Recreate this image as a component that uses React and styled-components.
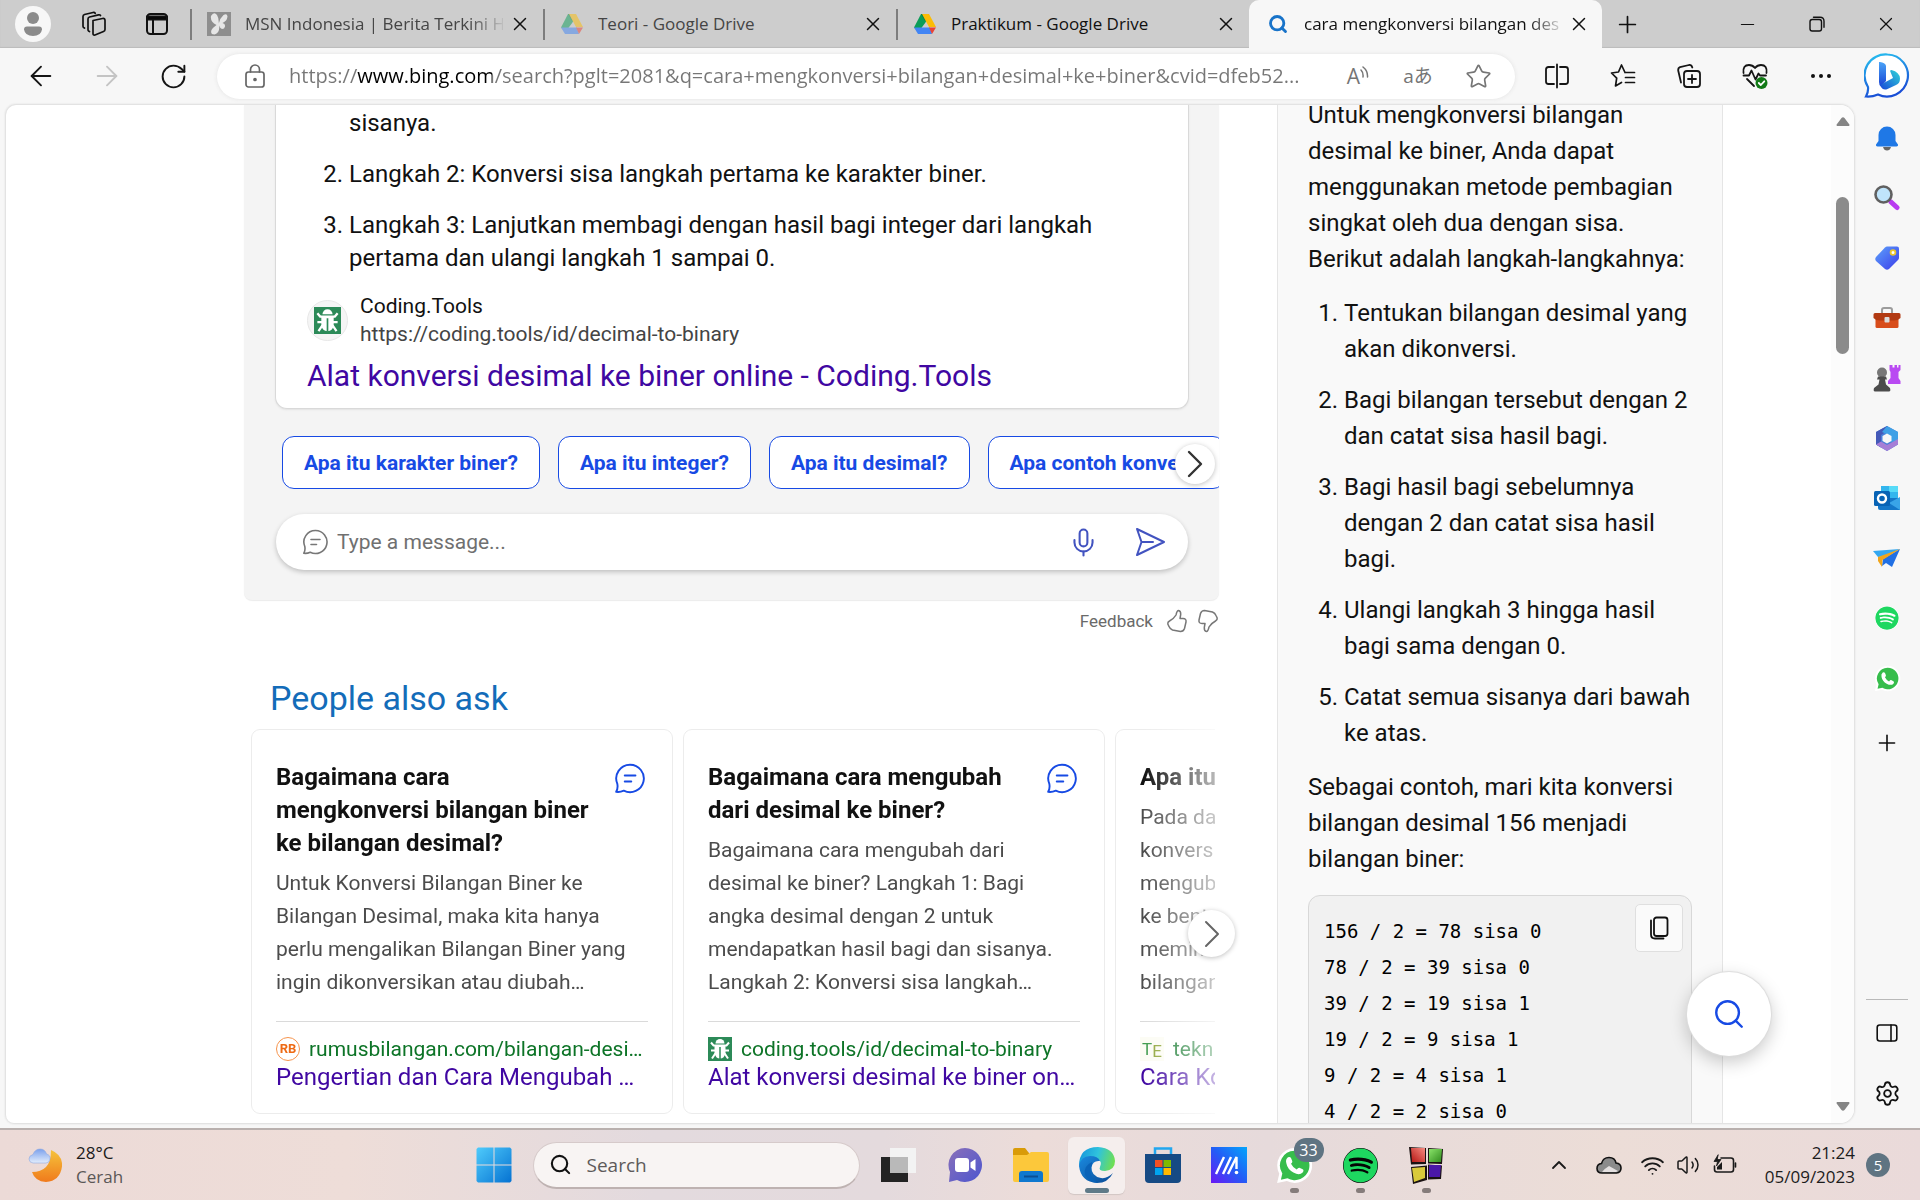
import React from "react";
import styled, { createGlobalStyle, css } from "styled-components";
import {
  ArrowLeft, ArrowRight, RotateCw, Star, X, Plus, Minus, Search, Mic,
  ChevronUp, Wifi, Volume2, Settings,
} from "lucide-react";
import { FaSpotify } from "react-icons/fa";

const ui = `"Open Sans", "Noto Sans", "Noto Sans CJK JP", sans-serif`;
const body = `Roboto, "Liberation Sans", sans-serif`;

const Global = createGlobalStyle`
  *, *::before, *::after { box-sizing: border-box; }
  body { margin: 0; background: #f7f7f7; }
  button { font: inherit; color: inherit; background: none; border: 0; padding: 0; cursor: pointer; }
  input { font: inherit; border: 0; padding: 0; background: none; outline: none; min-width: 0; }
  a { text-decoration: none; color: inherit; }
  p, h2, h3, ol, pre { margin: 0; padding: 0; font-weight: inherit; }
  svg { display: block; flex: none; }
`;

const Screen = styled.div`
  display: flex; flex-direction: column; height: 100vh; overflow: hidden;
  font-family: ${ui}; color: #111; background: #f7f7f7;
`;

/* ---------- browser chrome ---------- */
const TabStrip = styled.header`
  display: flex; height: 48px; flex: none; background: #cdcdcd; padding-left: 2px;
  box-shadow: inset 0 -1px 1px #bcbcbc;
`;
const StripButton = styled.button`
  width: ${p => p.$w || 62}px; display: flex; align-items: center; justify-content: center; flex: none;
`;
const Avatar = styled.span`
  width: 36px; height: 36px; border-radius: 50%; background: #f7f7f7;
  display: flex; align-items: center; justify-content: center;
`;
const Tab = styled.div`
  flex: 0 1 353px; min-width: 0; display: flex; align-items: center; padding: 0 12px 0 15px;
  border-left: 2px solid;
  border-image: linear-gradient(transparent 20%, #7d7d7d 20%, #7d7d7d 82%, transparent 82%) 1;
  font-size: 17px; color: ${p => (p.$dim ? "#454545" : "#111")};
  ${p => p.$active && css`
    border: 0; background: #f7f7f7; border-radius: 10px 10px 0 0; padding-left: 17px;
  `}
`;
const TabTitle = styled.span`
  flex: 1; min-width: 0; margin: 0 6px 0 14px; overflow: hidden; white-space: nowrap; line-height: 26px;
  ${p => p.$fade && css`mask-image: linear-gradient(to right, #000 calc(100% - 34px), rgba(0, 0, 0, 0.1));`}
`;
const TabSearch = styled(Search)`width: 24px; height: 24px; padding: 2px;`;
const Spacer = styled.div`flex: 1;`;

const Toolbar = styled.nav`display: flex; align-items: center; height: 57px; flex: none; padding: 0 0 1px 8px;`;
const ToolButton = styled.button`
  width: 66px; height: 45px; display: flex; align-items: center; justify-content: center; flex: none;
  color: ${p => (p.$off ? "#c4c4c4" : "#151515")};
`;
const Address = styled.form`
  flex: 1; min-width: 0; height: 45px; margin: 0 9px 0 11px; border-radius: 23px; background: #fff;
  box-shadow: 0 0 4px #e2e2e2; display: flex; align-items: center; padding: 0 7px 0 27px; color: #666;
`;
const AddressInput = styled.input`
  flex: 1; margin-left: 23px; font-size: 20px; line-height: 30px; text-overflow: ellipsis;
  color: transparent; background-clip: text; -webkit-background-clip: text;
  background-image: linear-gradient(to right, #767676 68px, #000 68px, #000 203px, #767676 203px);
`;
const AddressButton = styled.button`
  width: 60px; height: 45px; display: flex; align-items: center; justify-content: center; flex: none;
  font-size: 21px; color: #757575;
`;
const Translate = styled.span`font-size: 19px; line-height: 24px;`;
const BingButton = styled.button`width: 66px; display: flex; justify-content: center; flex: none;`;

const Body = styled.div`flex: 1; min-height: 0; display: flex; padding: 0 0 5px 6px;`;
const Frame = styled.div`
  flex: 1; min-width: 0; display: flex; overflow: hidden; background: #fff;
  border-radius: 10px 14px 14px 8px; box-shadow: 0 0 2px 1px #dcdcdc;
`;
const Page = styled.main`
  flex: 1; min-width: 0; position: relative; overflow: hidden; font-family: ${body};
  display: grid; grid-template-columns: minmax(0, 975px) 446px; column-gap: 58px; padding-left: 238px;
`;
const ScrollTrack = styled.div`
  width: 23px; flex: none; background: #fcfcfc; display: flex; flex-direction: column; align-items: center;
  padding: 12px 0;
`;
const Thumb = styled.div`width: 13px; height: 157px; border-radius: 7px; background: #8b8b8b; margin-top: 70px;`;

/* ---------- answer column ---------- */
const Column = styled.div`min-width: 0;`;
const ChatPanel = styled.section`
  background: #f4f4f4; border-radius: 0 0 8px 8px; padding-bottom: 30px; box-shadow: 0 1px 1px #ececec;
`;
const AnswerCard = styled.article`
  margin: 0 30px 0 31px; background: #fff; border: 1px solid #d9d9d9; border-top: 0;
  border-radius: 0 0 12px 12px; padding: 2px 31px 13px; box-shadow: 0 1px 2px #e2e2e2;
`;
const Steps = styled.ol`
  padding-left: ${p => (p.$side ? 36 : 42)}px; line-height: ${p => (p.$side ? 36 : 33)}px;
  font-size: 24px; color: #111;
  li + li { margin-top: ${p => (p.$side ? 15 : 18)}px; }
`;
const Step = styled.li`list-style: ${p => (p.$continued ? "none" : "decimal")};`;
const Site = styled.div`display: flex; align-items: center; gap: 12px; margin-top: 17px;`;
const SiteBadge = styled.span`
  width: 41px; height: 41px; border-radius: 50%; background: #f5f5f5; border: 1px solid #e8e8e8;
  display: flex; align-items: center; justify-content: center;
`;
const SiteText = styled.div`font-size: 21px; line-height: 28px; display: flex; flex-direction: column; color: #111;`;
const SiteUrl = styled.span`color: #444;`;
const ResultLink = styled.a`display: block; margin-top: 9px; font-size: 30px; line-height: 38px; color: #4007a2;`;

const ChipRow = styled.div`position: relative; margin-top: 27px; padding-left: 38px;`;
const Chips = styled.div`display: flex; gap: 18px; overflow: hidden;`;
const Chip = styled.button`
  height: 53px; flex: none; padding: 0 21px; border: 1px solid #174ae4; border-radius: 12px; background: #fff;
  color: #174ae4; font-size: 21px; font-weight: 700; white-space: nowrap; line-height: 28px;
`;
const RoundNext = styled.button`
  position: absolute; display: flex; align-items: center; justify-content: center; border-radius: 50%;
  background: #fff; box-shadow: 0 1px 5px rgba(0, 0, 0, 0.25);
  width: ${p => p.$size}px; height: ${p => p.$size}px; right: ${p => p.$right}px; top: ${p => p.$top}px;
  color: ${p => p.$ink || "#333"};
`;
const Composer = styled.form`
  margin: 25px 31px 0 32px; height: 56px; border-radius: 28px; background: #fff; display: flex; align-items: center;
  padding: 0 22px 0 26px; box-shadow: 0 2px 5px rgba(0, 0, 0, 0.22); color: #777;
  input { flex: 1; margin-left: 9px; font-size: 21px; line-height: 28px; color: #222; }
  input::placeholder { color: #707070; opacity: 1; }
  button { color: #4253c0; margin-left: 36px; }
`;
const Feedback = styled.div`
  display: flex; align-items: center; justify-content: flex-end; gap: 9px; height: 42px; color: #777;
  font-size: 17px; margin-bottom: 34px;
  span { margin-right: 4px; color: #6a6a6a; }
`;
const AskTitle = styled.h2`margin-left: 26px; font-size: 34px; line-height: 44px; color: #136cb9;`;
const AskWrap = styled.div`position: relative; margin: 9px 4px 0 7px;`;
const AskCards = styled.div`
  display: flex; gap: 10px; overflow: hidden;
  mask-image: linear-gradient(to right, #000 calc(100% - 72px), rgba(0, 0, 0, 0.3));
`;
const AskCard = styled.article`
  flex: 0 0 422px; border: 1px solid #ececec; border-radius: 9px; padding: 31px 24px 21px; white-space: nowrap;
`;
const AskHead = styled.div`display: flex; justify-content: space-between; align-items: flex-start;`;
const AskQuestion = styled.h3`font-size: 24px; line-height: 33px; font-weight: 700; color: #111;`;
const AskChat = styled.button`margin: 2px 3px 0 0;`;
const AskAnswer = styled.p`margin-top: 7px; font-size: 21px; line-height: 33px; color: #4c4c4c;`;
const Line = styled.span`display: block;`;
const AskSource = styled.a`
  display: block; margin-top: 22px; border-top: 1px solid #dadada; padding-top: 14px;
  font-size: 24px; line-height: 30px; color: #4007a2;
`;
const SourceUrl = styled.span`
  display: flex; align-items: center; gap: 9px; height: 26px; font-size: 21px; line-height: 26px; color: #0d7427;
`;
const LetterMark = styled.span`
  width: 24px; height: 24px; flex: none; display: flex; align-items: center; justify-content: center;
  font-size: 13px; line-height: 24px; font-weight: 700; color: #ee6a14;
  ${p => (p.$ring ? css`border: 1px solid #f5934c; border-radius: 50%;` : css`
    font-size: 17px; font-weight: 400; color: #3f9a4c; background: #fcfcf4;
    b { font-weight: 400; color: #8fa53a; padding-top: 4px; }
  `)}
`;

/* ---------- chat column ---------- */
const SidePanel = styled.aside`
  background: #f9f9f9; border: solid #e5e5e5; border-width: 0 1px; padding: 0 30px; overflow: hidden; height: 1018px;
  font-size: 24px; line-height: 36px; color: #111;
`;
const SideFlow = styled.div`display: flex; flex-direction: column; gap: 18px; margin-top: -8px; white-space: nowrap;`;
const CodeBox = styled.div`
  position: relative; border: 1px solid #d8d8d8; border-radius: 12px; background: #f1f1f1; padding: 17px 15px; height: 300px;
  pre { font-family: "DejaVu Sans Mono", "Liberation Mono", monospace; font-size: 19px; line-height: 36px; color: #000; }
`;
const CopyButton = styled.button`
  position: absolute; top: 8px; right: 8px; width: 48px; height: 48px; border: 1px solid #dfdfdf; border-radius: 5px;
  background: #fafafa; display: flex; align-items: center; justify-content: center;
`;
const SearchFab = styled.button`
  position: absolute; right: 60px; bottom: 67px; width: 84px; height: 84px; border-radius: 50%; background: #fff;
  box-shadow: 0 0 1px 1px #dcdcdc, 0 6px 18px rgba(0, 0, 0, 0.22); color: #174ae4;
  display: flex; align-items: center; justify-content: center;
`;

/* ---------- edge sidebar ---------- */
const SideBar = styled.nav`width: 66px; flex: none; display: flex; flex-direction: column; align-items: center; padding-top: 3px;`;
const SideButton = styled.button`width: 48px; height: 60px; flex: none; display: flex; align-items: center; justify-content: center;`;
const SideTools = styled.div`margin-top: auto; padding-top: 3px; border-top: 1px solid #b9b9b9; width: 42px; display: flex; flex-direction: column; align-items: center;`;
const SideApps = styled.div`display: flex; flex-direction: column; margin-bottom: 5px;`;

/* ---------- taskbar ---------- */
const TaskBar = styled.footer`
  height: 72px; flex: none; display: grid; grid-template-columns: 1fr auto 1fr; border-top: 2px solid #b9b0ae;
  background: linear-gradient(90deg, #ecdad7 0%, #eeddd8 18%, #e3dade 34%, #e4dadd 46%, #ecdcd9 54%, #e6dadb 66%, #ecddd7 84%, #eadada 100%);
`;
const Weather = styled.button`display: flex; align-items: center; gap: 14px; padding-left: 28px; text-align: left; justify-self: start;`;
const TwoLines = styled.span`
  display: flex; flex-direction: column; font-size: 17px; line-height: 24px; color: #1c1c1c; white-space: nowrap;
  text-align: ${p => p.$align || "left"};
  small { font-size: 17px; color: ${p => (p.$align ? "#1c1c1c" : "#5b5756")}; }
`;
const Apps = styled.div`display: flex; align-items: center;`;
const AppButton = styled.button`
  width: 66px; height: 70px; display: flex; align-items: center; justify-content: center; position: relative;
  &::after {
    content: ""; display: ${p => (p.$running || p.$focused ? "block" : "none")}; position: absolute; bottom: 7px;
    width: ${p => (p.$focused ? 24 : 9)}px; height: 5px; border-radius: 3px;
    background: ${p => (p.$focused ? "#5f7a88" : "#857c7b")};
  }
`;
const Tile = styled.span`
  width: 57px; height: 57px; border-radius: 6px; background: #f5eeed; box-shadow: 0 1px 1px #d2c6c4;
  display: flex; align-items: center; justify-content: center;
`;
const Count = styled.span`
  position: absolute; top: 8px; right: 4px; min-width: 30px; height: 24px; border-radius: 12px; background: #5f7482;
  color: #fff; font-size: 16px; line-height: 24px; text-align: center;
`;
const TaskSearch = styled.label`
  width: 327px; height: 47px; margin: 0 6px; border-radius: 24px; background: #f8f4f3; border: 1px solid #d6caca;
  border-bottom: 2px solid #beb2b1; display: flex; align-items: center; padding-left: 15px; gap: 15px;
  input { flex: 1; font-size: 19px; line-height: 28px; }
  input::placeholder { color: #5e5a5a; opacity: 1; }
`;
const Tray = styled.div`display: flex; align-items: center; justify-content: flex-end; padding-right: 30px;`;
const TrayButton = styled.button`
  height: 48px; width: ${p => p.$w}px; display: flex; align-items: center; justify-content: center; color: #1a1a1a; flex: none;
`;
const Clock = styled.button`margin-left: 20px;`;
const Notice = styled.button`
  width: 24px; height: 24px; border-radius: 50%; background: #5f7482; color: #fff; font-size: 15px; line-height: 24px; margin-left: 11px;
`;

/* ---------- drawings ---------- */
const line = { fill: "none", stroke: "currentColor", strokeLinecap: "round", strokeLinejoin: "round" };

const Workspaces = () => (
  <svg width="26" height="26" viewBox="0 0 26 26" {...line} strokeWidth="1.7">
    <path d="M12 9.500 21.500 7.500Q24 7 24 9.500V18.500Q24 20 22.500 20.500L14 24Q12 24.500 12 22.500Z" />
    <path d="M8.500 20.500 7.500 20Q7 19.500 7 18.500V8Q7 6.500 8.500 6L17.500 3.800Q19 3.500 19.500 4.500" />
    <path d="M3.500 17 2.500 16.500Q2 16 2 15V5.500Q2 4 3.500 3.500L12 1.500Q13.500 1.200 14.200 2.300" />
  </svg>
);
const TabActions = () => (
  <svg width="24" height="24" viewBox="0 0 24 24" {...line} strokeWidth="2">
    <rect x="2" y="2" width="20" height="20" rx="3.500" /><path d="M2 4.500h20V7.500H2z" fill="#000" /><path d="M8 8v14" />
  </svg>
);
const Person = () => (
  <svg width="20" height="26" viewBox="0 0 20 26" fill="#8b8b8b"><circle cx="10" cy="7" r="6" /><path d="M1 18.500Q1 15.500 4 15.500H16Q19 15.500 19 18.500Q18 25 10 25T1 18.500Z" /></svg>
);
const Msn = () => (
  <svg width="24" height="24" viewBox="0 0 24 24"><path fill="#8e8e8e" d="M0 0h24v24H0z" /><path fill="#e6e6e6" d="M4 4q3-5 6-1 2 3 1.800 8.500Q13 6 16.500 3 20 1 20.500 4.500 20 9 15.500 11q3 .5 2.500 3.500-.5 2.500-3 2.500-2-.5-2.800-3.500Q13 21 7.500 22.500 3 22.500 4.500 18 6 15.500 9.500 13 3 9.500 4 4Z" /></svg>
);
const Drive = ({ faded }) => (
  <svg width="24" height="24" viewBox="0 0 24 24" opacity={faded ? 0.5 : 1}>
    <path fill="#0b9d58" d="M8 2h4l3 5L5.500 20 1 15.500z" /><path fill="#0a7f43" d="M8 2 12 9 15 7 12 2z" />
    <path fill="#fbbc05" d="M9 2h7l7 13h-7z" /><path fill="#4285f4" d="M1 15.500h16L19 22H5z" /><path fill="#ea4335" d="M16 15.500h7L19 22z" />
  </svg>
);
const Restore = () => (
  <svg width="18" height="18" viewBox="0 0 18 18" {...line} strokeWidth="1.4"><rect x="2" y="4.500" width="11.500" height="11.500" rx="2.200" /><path d="M5.500 2.200h6.500q4 0 4 4v6" /></svg>
);
const Padlock = () => (
  <svg width="22" height="26" viewBox="0 0 22 26" {...line} strokeWidth="1.7"><rect x="2" y="9" width="18" height="15" rx="2.500" /><path d="M6.500 9V6.500a4.500 4.500 0 0 1 9 0V9" /><circle cx="11" cy="16.500" r="1" fill="currentColor" /></svg>
);
const Waves = () => (
  <svg width="9" height="20" viewBox="0 0 9 20" {...line} strokeWidth="1.500"><path d="M1 4q2.500 2.500 2 7M3 1q5 4 4.500 10" /></svg>
);
const SplitScreen = () => (
  <svg width="26" height="26" viewBox="0 0 26 26" {...line} strokeWidth="1.8"><path d="M10 4H4.500Q2 4 2 6.500v12Q2 21 4.500 21H10M16 4h5.500Q24 4 24 6.500v12Q24 21 21.500 21H16M13 1.500v23" /></svg>
);
const Favorites = () => (
  <svg width="26" height="26" viewBox="0 0 26 26" {...line} strokeWidth="1.7"><path d="M15 9.500 11.500 2 8.500 9 1.500 10l5.200 5.200L5.500 23l6-3.500M15.500 9.500h9M15.500 14.500h9M15.500 19.500h9" /></svg>
);
const Collections = () => (
  <svg width="26" height="26" viewBox="0 0 26 26" {...line} strokeWidth="1.8"><rect x="8" y="8" width="16" height="16" rx="3" /><path d="M16 12v8M12 16h8M5 19.500 2.200 7.500Q2 5 4 4.200L13 2Q15.500 1.700 16.300 4.500" /></svg>
);
const HeartPulse = () => (
  <svg width="28" height="28" viewBox="0 0 28 28" {...line} strokeWidth="1.8">
    <path d="M2.500 11Q1.500 3 8 3q3.500 0 6 3 2.500-3 6-3 6.500 0 5.500 8M2.500 13.500H8l2.500-5 4 9 3-6 1.500 2H25M6 17 13 24" />
    <circle cx="20.500" cy="21" r="6" fill="#127a16" stroke="none" /><path d="m17.800 21 2 2 3.500-3.700" stroke="#fff" />
  </svg>
);
const Dots = () => <svg width="22" height="6" viewBox="0 0 22 6" fill="#111"><circle cx="3" cy="3" r="2" /><circle cx="11" cy="3" r="2" /><circle cx="19" cy="3" r="2" /></svg>;
const Bing = () => (
  <svg width="46" height="46" viewBox="0 0 46 46">
    <defs>
      <linearGradient id="bubble" x1="0" y1="0" x2="0.3" y2="1"><stop stopColor="#27c3f0" /><stop offset="1" stopColor="#1a4fd6" /></linearGradient>
      <linearGradient id="stem" x1="0" y1="0" x2="0" y2="1"><stop stopColor="#4aa3f7" /><stop offset="1" stopColor="#1844d4" /></linearGradient>
      <linearGradient id="bowl" x1="0" y1="1" x2="1" y2="0"><stop stopColor="#1747d8" /><stop offset="1" stopColor="#2fd6d8" /></linearGradient>
    </defs>
    <path d="M23.500 1.500a21 21 0 1 1-9.500 40Q8 44 2 43.500 4.500 39 4 34A21 21 0 0 1 23.500 1.500Z" fill="#fff" stroke="url(#bubble)" strokeWidth="2.200" />
    <path d="M16 9q5 .8 6 3.500V28l-5 5.500q-2-1-2-4.500V9Z" fill="url(#stem)" />
    <path d="M16 32 29 25l-2.500-6q-1-2 1-2 8 2 8.500 8.500 0 5-4 6.500l-8.500 4q-5 2-7.500-4Z" fill="url(#bowl)" />
  </svg>
);
const ArrowHead = ({ down }) => <svg width="14" height="10" viewBox="0 0 14 10" fill="#858585"><path d={down ? "M1 1h12q1 1 0 2L8.500 9q-1.500 1.500-3 0L1 3Q0 2 1 1Z" : "M1 9h12q1-1 0-2L8.500 1q-1.500-1.500-3 0L1 7Q0 8 1 9Z"} /></svg>;
const NextArrow = ({ weight }) => <svg width="16" height="28" viewBox="0 0 16 28" {...line} strokeWidth={weight}><path d="M2 2 14 14 2 26" /></svg>;
const ThumbMark = ({ down }) => (
  <svg width="22" height="24" viewBox="0 0 22 24" {...line} strokeWidth="1.500">
    <path transform={down ? "rotate(180 11 12)" : undefined} d="M12.500 1.500q2.500.5 2.200 4L14 9.500h3q3.500 0 3 3.500l-1.500 6.500q-1 3-4 3L6.500 21Q4 20 3 17.500L1.800 15q-.3-2 1.700-3Q8 9.500 10 6q1-4.500 2.500-4.500Z" />
  </svg>
);
const Beetle = ({ size = 24 }) => (
  <svg width={size} height={size} viewBox="0 0 24 24">
    <path fill="#2c8a58" d="M0 0h24v24H0z" />
    <path d="M3 5.500 5.500 8.500H18.500L21 5.500M3 13.500h18M4 21.500 7 17h10l3 4.500" fill="none" stroke="#fff" strokeWidth="2" />
    <path fill="#fff" d="M7.500 6.500a4.500 4.500 0 0 1 9 0z" /><path fill="#fff" d="M6.500 8h11v8q-1 5.500-5.500 5.500T6.500 16z" /><path stroke="#2c8a58" strokeWidth="1.500" d="M12 10v12" />
  </svg>
);
const ChatBubble = ({ size = 26, color = "#777", weight = 1.6 }) => (
  <svg width={size} height={size} viewBox="0 0 26 26" {...line} stroke={color} strokeWidth={weight}>
    <path d="M13.500 1.500a11.500 11.500 0 1 1-5.300 21.700Q5 24.700 1.800 24.200 3.500 21.500 2.800 17.500A11.500 11.500 0 0 1 13.500 1.500ZM9 10.500h9M9 15.500h5.500" />
  </svg>
);
const Send = () => <svg width="31" height="30" viewBox="0 0 31 30" {...line} strokeWidth="2"><path d="M2 2 29 15 2 28 6.500 15ZM6.500 15H18" /></svg>;
const CopyIcon = () => <svg width="20" height="24" viewBox="0 0 20 24" {...line} strokeWidth="1.8"><rect x="5" y="1.500" width="13.500" height="18.500" rx="2.500" /><path d="M2 4.500V18.500Q2 22.500 6 22.500H14.500" /></svg>;

const Bell = () => (
  <svg width="24" height="26" viewBox="0 0 24 26"><path d="M8 22h8q-1 3.500-4 3.500T8 22Z" fill="#666" /><path d="M3.500 10a8.500 8.500 0 0 1 17 0v6l2.500 3.500q.5 2-1.500 2h-19q-2 0-1.500-2L3.500 16Z" fill="#1f78e6" /></svg>
);
const Magnifier = () => (
  <svg width="26" height="26" viewBox="0 0 26 26"><path d="m17 17 6 5.500" stroke="#b83bf0" strokeWidth="5" strokeLinecap="round" /><circle cx="9.500" cy="9.500" r="8" fill="#bfe4fb" stroke="#606060" strokeWidth="2.600" /></svg>
);
const PriceTag = () => (
  <svg width="26" height="26" viewBox="0 0 26 26"><defs><linearGradient id="tag" x1="0" y1="0" x2="1" y2="1"><stop stopColor="#5da2fb" /><stop offset="1" stopColor="#3b3bea" /></linearGradient></defs><path d="M13 1.500h10q2 0 2 2v9q0 1.500-1 2.500l-9 9q-2 1.500-4 0l-9-8q-1.500-2 0-4l9-9.500q1-1 2-1Z" fill="url(#tag)" /><circle cx="19" cy="7.500" r="2.400" fill="#fff" stroke="#ecc52c" strokeWidth="1.800" /></svg>
);
const Toolbox = () => (
  <svg width="28" height="24" viewBox="0 0 28 24"><path d="M9 7V4q0-2 2-2h6q2 0 2 2v3" fill="none" stroke="#9c9c9c" strokeWidth="2" /><path d="M2.500 12h23v8.500q0 1.500-1.500 1.500H4q-1.500 0-1.500-1.500Z" fill="#d84d1b" /><path d="M2 7h24q1.500 0 1.500 1.500V12q-3 3-8 2.500H8.500Q3 15 .5 12V8.500Q.5 7 2 7Z" fill="#b23a12" /><rect x="11.500" y="11" width="5" height="5.500" rx="1" fill="#dcdcdc" /></svg>
);
const Chess = () => (
  <svg width="28" height="28" viewBox="0 0 28 28"><path d="M16.500 1h3v2.500h2V1h2.500v2.500h1.500V1h2v5l-2 2v6l2 3v3H15v-3l2.500-3V8l-1-2z" fill="#b94af2" /><circle cx="9" cy="8.500" r="5" fill="#777" /><path d="M5 12.500h8l1 3h-2l1 5 4 3.500q1 3.500-1 3.500H2q-2 0-1-3.500L5.500 20.500l1-5H4Z" fill="#4c4c4c" /></svg>
);
const Office = () => (
  <svg width="26" height="27" viewBox="0 0 26 27"><path d="M13 1 24 7v12.500L13 26 2 19.500V7Z" fill="#4a7fd8" /><path d="M13 1 2 7v12.500l5 3V10l9-6Z" fill="#4459b8" /><path d="m13 1 11 6v9l-7 1v-6L8 7Z" fill="#3fa0e6" /><path d="M2 19.500 13 26l11-6.500V14l-11 6-6-3.500Z" fill="#a67ed6" /><path d="m13 8.500 4.500 2.500v5L13 18.500 8.500 16v-5Z" fill="#f7f7f7" /></svg>
);
const Outlook = () => (
  <svg width="26" height="26" viewBox="0 0 26 26"><path d="M7 1h17v12H7z" fill="#33b6ee" /><path d="M15 1h9v6h-9z" fill="#57dbf8" /><path d="M4 13h22v12H6q-2 0-2-2z" fill="#1477c9" /><path d="M26 12v13L15 18z" fill="#39a4e8" /><rect x="0" y="6" width="16" height="15" rx="1.500" fill="#0863b5" /><circle cx="8" cy="13.500" r="4" fill="none" stroke="#fff" strokeWidth="2.400" /></svg>
);
const PaperPlane = () => (
  <svg width="28" height="20" viewBox="0 0 28 20"><path d="M0 3 27 1 14 8 5 9Z" fill="#34a8f1" /><path d="M27 1 19 19 13 15 9 18 10 11Z" fill="#2170e4" /><path d="M27 1 5 9v4l4 6 .5-7Z" fill="#f1a51b" /></svg>
);
const PanelIcon = () => <svg width="22" height="20" viewBox="0 0 22 20" {...line} strokeWidth="1.600"><rect x="1.200" y="2" width="19.600" height="16" rx="2.500" /><path d="M15 2v16" /></svg>;

const SpotifyMark = styled(FaSpotify)`
  width: ${p => p.$size}px; height: ${p => p.$size}px; color: #1ed760; background: ${p => p.$ink}; border-radius: 50%;
`;
const WhatsMark = ({ size }) => (
  <svg width={size} height={size} viewBox="0 0 34 34"><path d="M17 1a16 16 0 1 1-7 30.300L1 33l2-8.500A16 16 0 0 1 17 1Z" fill="#fff" /><path d="M17 3.500a13.500 13.500 0 1 1-6.500 25.200L4.500 30l1.300-5.700A13.500 13.500 0 0 1 17 3.500Z" fill="#37bd4c" /><path d="M11 9.500q2-1 3 1l1 2.500q.3 1-1.200 2.500 2 4 5.200 5.200 1.500-2 2.500-1.700l3 1.500q1.500 1 0 3-3 3-8.500 0T9.500 15q-1-3.500 1.500-5.500Z" fill="#fff" /></svg>
);
const Moon = () => (
  <svg width="34" height="36" viewBox="0 0 34 36"><defs><linearGradient id="moon" x1="0" y1="0" x2="0" y2="1"><stop stopColor="#f5c33b" /><stop offset="1" stopColor="#f07a1c" /></linearGradient><linearGradient id="puff" x1="0" y1="0" x2="0" y2="1"><stop stopColor="#7ba0ec" /><stop offset="1" stopColor="#e3edfc" /></linearGradient></defs><path d="M23 3q12 5 11 16.500Q32 34 18 35 7 34.500 4 25q9 0 14-5T23 3Z" fill="url(#moon)" /><path d="M5 16q-4-.5-4-4t4-4.500Q7 2 12 2t6.500 5q4 1 3.500 5t-4 4Z" fill="url(#puff)" stroke="#8fa9e0" strokeWidth=".6" /></svg>
);
const Start = () => (
  <svg width="36" height="36" viewBox="0 0 36 36"><defs><linearGradient id="win" x1="0" y1="0" x2="1" y2="1"><stop stopColor="#4fcbfb" /><stop offset="1" stopColor="#0572d2" /></linearGradient></defs><path d="M2 .5h15.500v17H.5V2zM18.500.5H34l1.500 1.500v15.500h-17zM.5 18.500h17v17H2L.5 34zM18.500 18.500h17V34L34 35.500H18.500z" fill="url(#win)" /></svg>
);
const TaskView = () => (
  <svg width="36" height="36" viewBox="0 0 36 36"><path d="M0 10h27v25H0z" fill="#232323" /><path d="M9 1h26v25H9z" fill="#f3f3f3" /><path d="M9 10h18v16H9z" fill="#b9b9b9" /></svg>
);
const Meet = () => (
  <svg width="36" height="36" viewBox="0 0 36 36"><defs><linearGradient id="meet" x1="0" y1="0" x2="1" y2="1"><stop stopColor="#8a70b9" /><stop offset="1" stopColor="#4c55cf" /></linearGradient></defs><path d="M18 1a17 17 0 1 1-8 32l-8 2 1-10A17 17 0 0 1 18 1Z" fill="url(#meet)" /><rect x="8" y="11" width="14" height="14" rx="3" fill="#fff" /><path d="m23.500 15.500 5-3.500v12l-5-3.500z" fill="#fff" /></svg>
);
const Folder = () => (
  <svg width="38" height="36" viewBox="0 0 38 36"><path d="M1 3q0-2 2-2h10l4 5v4H1z" fill="#d99b08" /><path d="M1 8h14l4-3h16q2 0 2 2v26q0 2-2 2H3q-2 0-2-2z" fill="#fcc83b" /><path d="M7 35V27q0-3 3-3h18q3 0 3 3v8z" fill="#0f78cf" /><path d="M12 29.500h14" stroke="#0a4f94" strokeWidth="2" /></svg>
);
const Edge = () => (
  <svg width="38" height="38" viewBox="0 0 38 38">
    <defs>
      <linearGradient id="edgeTop" x1="0" y1="0.300" x2="1" y2="0.500"><stop stopColor="#1797dc" /><stop offset=".5" stopColor="#2fc3dd" /><stop offset="1" stopColor="#6fdf52" /></linearGradient>
      <linearGradient id="edgeLow" x1="0" y1="0" x2="1" y2="1"><stop stopColor="#1a8ae0" /><stop offset="1" stopColor="#0b4a94" /></linearGradient>
    </defs>
    <path d="M1 20Q1 1 20 1q16 1 17 14 0 9-10 10-7 0-5-4 3-6-4-9Q8 9 1 20Z" fill="url(#edgeTop)" />
    <path d="M1 20Q3 10 12 10q8 0 10 5-7-1-8.500 6Q13 30 23 32q6 1 12-5-5 10-16 10Q3 36 1 20Z" fill="url(#edgeLow)" />
    <path d="M14 19q-5 11 6 18-9-1-13-8-2-9 7-13Z" fill="#0a63b8" />
  </svg>
);
const Store = () => (
  <svg width="36" height="38" viewBox="0 0 36 38"><path d="M10 9V2.500h16V9" fill="none" stroke="#21a7ef" strokeWidth="2.500" /><path d="M0 8h36v25q0 4-4 4H4q-4 0-4-4z" fill="#164a84" /><path d="M10 14h7.500v7H10z" fill="#f25022" /><path d="M18.500 14H26v7h-7.500z" fill="#7fba00" /><path d="M10 22h7.500v7H10z" fill="#00a4ef" /><path d="M18.500 22H26v7h-7.500z" fill="#ffb900" /></svg>
);
const Armoury = () => (
  <svg width="36" height="36" viewBox="0 0 36 36"><defs><linearGradient id="arm" x1="0" y1="1" x2="1" y2="0"><stop stopColor="#6a18f5" /><stop offset=".5" stopColor="#245cf6" /><stop offset="1" stopColor="#03a5fb" /></linearGradient></defs><path d="M0 0h36v36H0z" fill="url(#arm)" /><path d="M5 27 13 10M12 27 20 10M17 27 25.500 10V22" fill="none" stroke="#fff" strokeWidth="2.400" /><circle cx="25.500" cy="25.500" r="1.800" fill="#fff" /></svg>
);
const Cubes = () => (
  <svg width="36" height="38" viewBox="0 0 36 38">
    <defs><linearGradient id="red" x1="1" y1="0" x2="0" y2="1"><stop stopColor="#f58b80" /><stop offset="1" stopColor="#b51512" /></linearGradient><linearGradient id="green" x1="0" y1="0" x2="1" y2="1"><stop stopColor="#8ae36a" /><stop offset="1" stopColor="#2f8a1c" /></linearGradient></defs>
    <path d="M0 1 17 2v16l-15 .5ZM19 2l15 1-1 15-14-.5ZM2 21l16-1.500V34L4 38ZM19 18.500l14 1L32 33l-13 .5Z" fill="#1a1212" />
    <path d="M2 2h14v14H3z" fill="url(#red)" /><path d="M20 3h13l-1 13H20z" fill="url(#green)" /><path d="m3 22 13-1v11L5 36z" fill="#d9ca3a" /><path d="M20 19h12l-1 12H20z" fill="#4a17a8" />
  </svg>
);
const CloudMark = () => (
  <svg width="26" height="18" viewBox="0 0 26 18"><path d="M6 17q-5 0-5-4.500Q1 8 5.500 7.500 7 1.500 13 1.500T20 7q5 .5 5 5t-4.500 5Z" fill="#8b8b8b" stroke="#111" strokeWidth="1.600" /><path d="M6 16q2-3 7-6l9 5-2 1Z" fill="#e4e0e0" /></svg>
);
const Battery = () => (
  <svg width="25" height="22" viewBox="0 0 25 22" {...line} strokeWidth="1.600"><path d="M9 4h10q2.500 0 2.500 2.500v9Q21.500 18 19 18H5q-2.500 0-2.500-2.500V12M23.500 9v4" /><path d="M6 1 2 7.500h3.500L4.500 12 9 5.500H5.500Z" fill="currentColor" strokeWidth=".8" /><path d="M5 15.500V13l5-5v7.500z" fill="currentColor" stroke="none" /></svg>
);

const QUESTIONS = [
  {
    title: ["Bagaimana cara", "mengkonversi bilangan biner", "ke bilangan desimal?"],
    text: ["Untuk Konversi Bilangan Biner ke", "Bilangan Desimal, maka kita hanya", "perlu mengalikan Bilangan Biner yang", "ingin dikonversikan atau diubah…"],
    mark: <LetterMark $ring>RB</LetterMark>, url: "rumusbilangan.com/bilangan-desi…", link: "Pengertian dan Cara Mengubah …",
  },
  {
    title: ["Bagaimana cara mengubah", "dari desimal ke biner?"],
    text: ["Bagaimana cara mengubah dari", "desimal ke biner? Langkah 1: Bagi", "angka desimal dengan 2 untuk", "mendapatkan hasil bagi dan sisanya.", "Langkah 2: Konversi sisa langkah…"],
    mark: <Beetle />, url: "coding.tools/id/decimal-to-binary", link: "Alat konversi desimal ke biner on…",
  },
  {
    title: ["Apa itu"],
    text: ["Pada da", "konvers", "mengub", "ke bent", "memin", "bilangan"],
    mark: <LetterMark>T<b>E</b></LetterMark>, url: "tekn", link: "Cara Ko",
  },
];
const CHIPS = ["Apa itu karakter biner?", "Apa itu integer?", "Apa itu desimal?", "Apa contoh konversi"];
const SIDE_STEPS = [
  ["Tentukan bilangan desimal yang", "akan dikonversi."],
  ["Bagi bilangan tersebut dengan 2", "dan catat sisa hasil bagi."],
  ["Bagi hasil bagi sebelumnya", "dengan 2 dan catat sisa hasil", "bagi."],
  ["Ulangi langkah 3 hingga hasil", "bagi sama dengan 0."],
  ["Catat semua sisanya dari bawah", "ke atas."],
];
const CODE = `156 / 2 = 78 sisa 0
78 / 2 = 39 sisa 0
39 / 2 = 19 sisa 1
19 / 2 = 9 sisa 1
9 / 2 = 4 sisa 1
4 / 2 = 2 sisa 0`;
const SIDE_APPS = [
  ["Notifications", <Bell />], ["Search", <Magnifier />], ["Shopping", <PriceTag />], ["Tools", <Toolbox />],
  ["Games", <Chess />], ["Microsoft 365", <Office />], ["Outlook", <Outlook />], ["Drop", <PaperPlane />],
  ["Spotify", <SpotifyMark $size={24} $ink="#fff" />], ["WhatsApp", <WhatsMark size={27} />],
];
const lines = list => list.map(t => <Line key={t}>{t}</Line>);

function BrowserTab({ icon, title, $fade, ...rest }) {
  return (
    <Tab {...rest}>
      {icon}
      <TabTitle $fade={$fade}>{title}</TabTitle>
      <button aria-label="Close tab"><X size={22} strokeWidth={1.6} color="#111" /></button>
    </Tab>
  );
}

function Question({ title, text, mark, url, link }) {
  return (
    <AskCard>
      <AskHead>
        <AskQuestion>{lines(title)}</AskQuestion>
        <AskChat aria-label="Ask in chat"><ChatBubble size={31} color="#174ae4" /></AskChat>
      </AskHead>
      <AskAnswer>{lines(text)}</AskAnswer>
      <AskSource href="#"><SourceUrl>{mark}{url}</SourceUrl>{link}</AskSource>
    </AskCard>
  );
}

export default function App() {
  return (
    <Screen>
      <Global />
      <TabStrip>
        <StripButton aria-label="Profile"><Avatar><Person /></Avatar></StripButton>
        <StripButton aria-label="Workspaces" $w={60}><Workspaces /></StripButton>
        <StripButton aria-label="Tab actions" $w={66}><TabActions /></StripButton>
        <BrowserTab $dim $fade icon={<Msn />} title="MSN Indonesia | Berita Terkini H" />
        <BrowserTab $dim icon={<Drive faded />} title="Teori - Google Drive" />
        <BrowserTab icon={<Drive />} title="Praktikum - Google Drive" />
        <BrowserTab $active $fade icon={<TabSearch strokeWidth={3.4} color="#1873c9" />} title="cara mengkonversi bilangan des" />
        <StripButton aria-label="New tab" $w={50}><Plus size={27} strokeWidth={1.5} /></StripButton>
        <Spacer />
        <StripButton aria-label="Minimize" $w={69}><Minus size={21} strokeWidth={1.3} /></StripButton>
        <StripButton aria-label="Restore" $w={69}><Restore /></StripButton>
        <StripButton aria-label="Close" $w={69}><X size={22} strokeWidth={1.3} /></StripButton>
      </TabStrip>

      <Toolbar>
        <ToolButton aria-label="Back"><ArrowLeft size={32} strokeWidth={1.4} /></ToolButton>
        <ToolButton aria-label="Forward" $off><ArrowRight size={32} strokeWidth={1.4} /></ToolButton>
        <ToolButton aria-label="Reload"><RotateCw size={29} strokeWidth={1.6} /></ToolButton>
        <Address>
          <Padlock />
          <AddressInput aria-label="Address" defaultValue="https://www.bing.com/search?pglt=2081&q=cara+mengkonversi+bilangan+desimal+ke+biner&cvid=dfeb52..." />
          <AddressButton type="button" aria-label="Read aloud">A<Waves /></AddressButton>
          <AddressButton type="button" aria-label="Translate"><Translate>aあ</Translate></AddressButton>
          <AddressButton type="button" aria-label="Add to favorites"><Star size={27} strokeWidth={1.5} /></AddressButton>
        </Address>
        <ToolButton aria-label="Split screen"><SplitScreen /></ToolButton>
        <ToolButton aria-label="Favorites"><Favorites /></ToolButton>
        <ToolButton aria-label="Collections"><Collections /></ToolButton>
        <ToolButton aria-label="Browser essentials"><HeartPulse /></ToolButton>
        <ToolButton aria-label="More"><Dots /></ToolButton>
        <BingButton aria-label="Bing chat"><Bing /></BingButton>
      </Toolbar>

      <Body>
        <Frame>
          <Page>
            <Column>
              <ChatPanel>
                <AnswerCard>
                  <Steps>
                    <Step $continued>sisanya.</Step>
                    <Step>Langkah 2: Konversi sisa langkah pertama ke karakter biner.</Step>
                    <Step>{lines(["Langkah 3: Lanjutkan membagi dengan hasil bagi integer dari langkah", "pertama dan ulangi langkah 1 sampai 0."])}</Step>
                  </Steps>
                  <Site>
                    <SiteBadge><Beetle size={27} /></SiteBadge>
                    <SiteText><span>Coding.Tools</span><SiteUrl>https://coding.tools/id/decimal-to-binary</SiteUrl></SiteText>
                  </Site>
                  <ResultLink href="#">Alat konversi desimal ke biner online - Coding.Tools</ResultLink>
                </AnswerCard>
                <ChipRow>
                  <Chips>{CHIPS.map(c => <Chip key={c}>{c}</Chip>)}</Chips>
                  <RoundNext aria-label="More suggestions" $size={40} $right={4} $top={8}><NextArrow weight={2.4} /></RoundNext>
                </ChipRow>
                <Composer>
                  <ChatBubble />
                  <input aria-label="Message" placeholder="Type a message..." />
                  <button type="button" aria-label="Voice"><Mic size={31} strokeWidth={1.6} /></button>
                  <button type="button" aria-label="Send"><Send /></button>
                </Composer>
              </ChatPanel>
              <Feedback>
                <span>Feedback</span>
                <button aria-label="Like"><ThumbMark /></button>
                <button aria-label="Dislike"><ThumbMark down /></button>
              </Feedback>
              <AskTitle>People also ask</AskTitle>
              <AskWrap>
                <AskCards>{QUESTIONS.map(q => <Question key={q.url} {...q} />)}</AskCards>
                <RoundNext aria-label="Next questions" $size={47} $right={-20} $top={181} $ink="#666"><NextArrow weight={2} /></RoundNext>
              </AskWrap>
            </Column>

            <SidePanel>
              <SideFlow>
                <p>{lines(["Untuk mengkonversi bilangan", "desimal ke biner, Anda dapat", "menggunakan metode pembagian", "singkat oleh dua dengan sisa.", "Berikut adalah langkah-langkahnya:"])}</p>
                <Steps $side>{SIDE_STEPS.map(s => <Step key={s[0]}>{lines(s)}</Step>)}</Steps>
                <p>{lines(["Sebagai contoh, mari kita konversi", "bilangan desimal 156 menjadi", "bilangan biner:"])}</p>
                <CodeBox>
                  <pre>{CODE}</pre>
                  <CopyButton aria-label="Copy"><CopyIcon /></CopyButton>
                </CodeBox>
              </SideFlow>
            </SidePanel>
            <SearchFab aria-label="Search"><Search size={34} strokeWidth={1.7} /></SearchFab>
          </Page>
          <ScrollTrack><ArrowHead /><Thumb /><Spacer /><ArrowHead down /></ScrollTrack>
        </Frame>
        <SideBar>
          <SideApps>
            {SIDE_APPS.map(([name, icon]) => <SideButton key={name} aria-label={name}>{icon}</SideButton>)}
          </SideApps>
          <SideButton aria-label="Add"><Plus size={26} strokeWidth={1.5} /></SideButton>
          <SideTools>
            <SideButton aria-label="Toggle sidebar"><PanelIcon /></SideButton>
            <SideButton aria-label="Settings"><Settings size={27} strokeWidth={1.6} /></SideButton>
          </SideTools>
        </SideBar>
      </Body>

      <TaskBar>
        <Weather><Moon /><TwoLines>28°C<small>Cerah</small></TwoLines></Weather>
        <Apps>
          <AppButton aria-label="Start"><Start /></AppButton>
          <TaskSearch><Search size={23} strokeWidth={2.2} /><input aria-label="Search" placeholder="Search" /></TaskSearch>
          <AppButton aria-label="Task view"><TaskView /></AppButton>
          <AppButton aria-label="Chat"><Meet /></AppButton>
          <AppButton aria-label="Explorer"><Folder /></AppButton>
          <AppButton aria-label="Edge" $focused><Tile><Edge /></Tile></AppButton>
          <AppButton aria-label="Store"><Store /></AppButton>
          <AppButton aria-label="MyASUS"><Armoury /></AppButton>
          <AppButton aria-label="WhatsApp" $running><WhatsMark size={37} /><Count>33</Count></AppButton>
          <AppButton aria-label="Spotify" $running><SpotifyMark $size={35} $ink="#050505" /></AppButton>
          <AppButton aria-label="Cubes" $running><Cubes /></AppButton>
        </Apps>
        <Tray>
          <TrayButton aria-label="Hidden icons" $w={48}><ChevronUp size={24} strokeWidth={1.8} /></TrayButton>
          <TrayButton aria-label="OneDrive" $w={52}><CloudMark /></TrayButton>
          <TrayButton aria-label="Network" $w={36}><Wifi size={25} strokeWidth={1.8} /></TrayButton>
          <TrayButton aria-label="Volume" $w={34}><Volume2 size={24} strokeWidth={1.5} /></TrayButton>
          <TrayButton aria-label="Battery" $w={40}><Battery /></TrayButton>
          <Clock><TwoLines $align="right">21:24<small>05/09/2023</small></TwoLines></Clock>
          <Notice aria-label="Notifications">5</Notice>
        </Tray>
      </TaskBar>
    </Screen>
  );
}
